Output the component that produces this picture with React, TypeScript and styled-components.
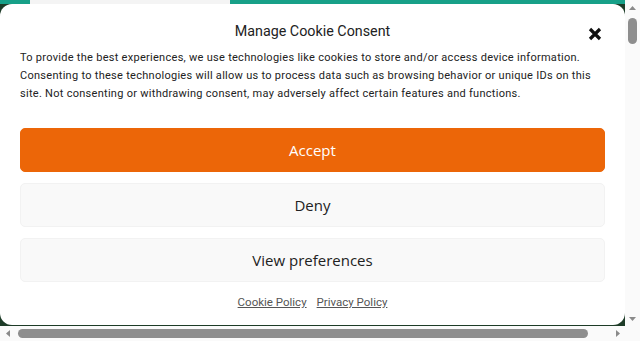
import React from "react";
import styled, { createGlobalStyle } from "styled-components";

const Global = createGlobalStyle`
  html, body { margin: 0; padding: 0; background: #ffffff; overflow: hidden; }
  * { box-sizing: border-box; }
`;

const Frame = styled.div`
  width: 640px;
  height: 341px;
  display: grid;
  grid-template-columns: 625px 15px;
  grid-template-rows: 326px 15px;
  background: #fafafa;
`;

const Stage = styled.div`
  display: flex;
  flex-direction: column;
  background: #1d3b27;
  overflow: hidden;
`;

const TopStrip = styled.div`
  height: 4px;
  display: flex;
  flex: none;
`;

const StripPart = styled.div<{ $w?: number; $grey?: boolean }>`
  height: 100%;
  background: ${(p) => (p.$grey ? "#f4f4f4" : "#17a088")};
  ${(p) => (p.$w ? `width: ${p.$w}px; flex: none;` : "flex: 1;")}
`;

const Modal = styled.div`
  flex: 1;
  margin-bottom: 1px;
  background: #ffffff;
  border-radius: 12px;
  padding: 17px 20px 0;
  display: flex;
  flex-direction: column;
  font-family: Roboto, "Liberation Sans", sans-serif;
  color: #222222;
`;

const Header = styled.div`
  display: grid;
  grid-template-columns: 1fr auto 1fr;
  align-items: center;
  height: 20px;
`;

const Title = styled.div`
  grid-column: 2;
  font-size: 14.3px;
  line-height: 20px;
  color: #222222;
  white-space: nowrap;
`;

const Close = styled.button`
  grid-column: 3;
  justify-self: end;
  margin-right: 3px;
  margin-top: 6px;
  width: 14px;
  height: 14px;
  padding: 0;
  border: none;
  background: none;
  display: flex;
`;

const Body = styled.p`
  margin: 8px 0 0;
  font-size: 11px;
  letter-spacing: 0.28px;
  line-height: 18px;
  color: #222222;
  white-space: nowrap;
`;

const Buttons = styled.div`
  margin-top: 25px;
  display: flex;
  flex-direction: column;
  gap: 11px;
`;

const Btn = styled.button<{ $primary?: boolean }>`
  height: 44px;
  width: 100%;
  border-radius: 5px;
  font-family: "Open Sans", "Noto Sans", sans-serif;
  font-size: 15px;
  border: 1px solid ${(p) => (p.$primary ? "#ec6608" : "#f2f2f2")};
  background: ${(p) => (p.$primary ? "#ec6608" : "#f9f9f9")};
  color: ${(p) => (p.$primary ? "#ffffff" : "#222222")};
  display: flex;
  align-items: center;
  justify-content: center;
`;

const Links = styled.div`
  margin-top: 12px;
  display: flex;
  justify-content: center;
  gap: 10px;
  font-size: 11.5px;
  line-height: 16px;
`;

const Link = styled.a`
  color: #555555;
  text-decoration: underline;
`;

const VBar = styled.div`
  display: flex;
  flex-direction: column;
  align-items: center;
  background: #fafafa;
`;

const HBar = styled.div`
  display: flex;
  align-items: center;
  background: #fafafa;
`;

const ArrowBox = styled.div`
  width: 15px;
  height: 15px;
  flex: none;
  display: flex;
  align-items: center;
  justify-content: center;
`;

const Spacer = styled.div`
  flex: 1;
`;

const VThumb = styled.div`
  margin-top: 3px;
  width: 9px;
  height: 26px;
  border-radius: 5px;
  background: #8e8e8e;
`;

const HThumb = styled.div`
  margin-left: 3px;
  width: 570px;
  height: 9px;
  border-radius: 5px;
  background: #8e8e8e;
`;

const Corner = styled.div`
  background: #fafafa;
`;

const Tri = ({ dir }: { dir: "up" | "down" | "left" | "right" }) => {
  const pts = {
    up: "0,4 3.5,0 7,4",
    down: "0,0 7,0 3.5,4",
    left: "4,0 4,7 0,3.5",
    right: "0,0 4,3.5 0,7",
  }[dir];
  const vert = dir === "up" || dir === "down";
  return (
    <svg width={vert ? 7 : 4} height={vert ? 4 : 7} viewBox={vert ? "0 0 7 4" : "0 0 4 7"}>
      <polygon points={pts} fill="#8a8a8a" />
    </svg>
  );
};

export default function App() {
  return (
    <>
      <Global />
      <Frame>
        <Stage>
          <TopStrip>
            <StripPart $w={30} />
            <StripPart $w={200} $grey />
            <StripPart />
          </TopStrip>
          <Modal>
            <Header>
              <Title>Manage Cookie Consent</Title>
              <Close aria-label="close">
                <svg width="14" height="14" viewBox="0 0 14 14">
                  <path d="M2 2 L12 12 M12 2 L2 12" stroke="#111" strokeWidth="3.2" strokeLinecap="butt" />
                </svg>
              </Close>
            </Header>
            <Body>
              To provide the best experiences, we use technologies like cookies to store and/or access device information.
              <br />
              Consenting to these technologies will allow us to process data such as browsing behavior or unique IDs on this
              <br />
              site. Not consenting or withdrawing consent, may adversely affect certain features and functions.
            </Body>
            <Buttons>
              <Btn $primary>Accept</Btn>
              <Btn>Deny</Btn>
              <Btn>View preferences</Btn>
            </Buttons>
            <Links>
              <Link>Cookie Policy</Link>
              <Link>Privacy Policy</Link>
            </Links>
          </Modal>
        </Stage>
        <VBar>
          <ArrowBox><Tri dir="up" /></ArrowBox>
          <VThumb />
          <Spacer />
          <ArrowBox><Tri dir="down" /></ArrowBox>
        </VBar>
        <HBar>
          <ArrowBox><Tri dir="left" /></ArrowBox>
          <HThumb />
          <Spacer />
          <ArrowBox><Tri dir="right" /></ArrowBox>
        </HBar>
        <Corner />
      </Frame>
    </>
  );
}
